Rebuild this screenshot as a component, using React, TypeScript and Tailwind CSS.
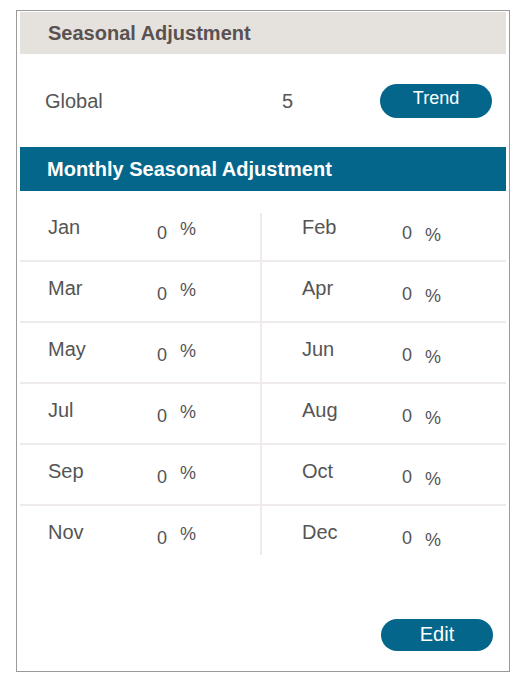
import React from 'react';

const months: [string, string][] = [
  ['Jan', 'Feb'],
  ['Mar', 'Apr'],
  ['May', 'Jun'],
  ['Jul', 'Aug'],
  ['Sep', 'Oct'],
  ['Nov', 'Dec'],
];

const Cell: React.FC<{ label: string; right?: boolean }> = ({ label, right }) => (
  <div className={`flex items-start h-full ${right ? 'flex-1 pl-[40px]' : 'w-[240px] pl-[28px]'}`}>
    <span className={`text-[20px] leading-[23px] mt-[15px] text-[#555] ${right ? 'w-[100px]' : 'w-[109px]'}`}>
      {label}
    </span>
    <span className="text-[18px] leading-[21px] mt-[22px] text-[#555] w-[23px]">0</span>
    <span className={`text-[18px] leading-[21px] text-[#555] ${right ? 'mt-[24px]' : 'mt-[18px]'}`}>%</span>
  </div>
);

export default function App() {
  return (
    <div className="pl-[16px] pt-[10px] font-[Liberation_Sans,Arial,sans-serif]">
      <div className="w-[494px] h-[662px] border border-[#9a9a9a] px-[3px] pt-[1px] flex flex-col bg-white">
        <div className="h-[42px] bg-[#e5e2dd] flex items-center pl-[28px]">
          <span className="text-[20px] font-bold text-[#5a5151]">Seasonal Adjustment</span>
        </div>

        <div className="h-[93px] flex items-center">
          <span className="pl-[25px] w-[262px] text-[20px] text-[#555]">Global</span>
          <span className="text-[20px] text-[#555] w-[98px]">5</span>
          <button className="w-[112px] h-[34px] rounded-full bg-[#04668a] text-white text-[18px] pb-[4px] flex items-center justify-center">
            Trend
          </button>
        </div>

        <div className="h-[44px] bg-[#04668a] flex items-center pl-[27px]">
          <span className="text-[20px] font-bold text-white">Monthly Seasonal Adjustment</span>
        </div>

        <div className="pt-[10px] flex flex-col">
          {months.map(([a, b], i) => (
            <div
              key={a}
              className={`h-[61px] flex ${i < months.length - 1 ? 'border-b-2 border-[#efebeb]' : ''}`}
            >
              <Cell label={a} />
              <div
                className={`w-[2px] bg-[#efebeb] ${i === 0 ? 'mt-[12px]' : ''} ${i === months.length - 1 ? 'mb-[12px]' : ''}`}
              />
              <Cell label={b} right />
            </div>
          ))}
        </div>

        <div className="flex-1 flex items-end justify-end pr-[13px] pb-[20px]">
          <button className="w-[112px] h-[32px] rounded-full bg-[#04668a] text-white text-[20px] pb-[3px] flex items-center justify-center">
            Edit
          </button>
        </div>
      </div>
    </div>
  );
}
